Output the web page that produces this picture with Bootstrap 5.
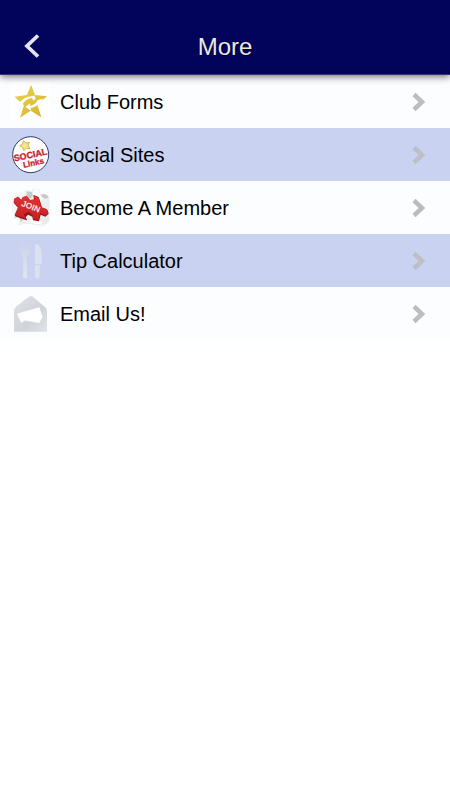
<!DOCTYPE html>
<html lang="en">
<head>
<meta charset="utf-8">
<meta name="viewport" content="width=device-width, initial-scale=1">
<title>More</title>
<link href="https://cdn.jsdelivr.net/npm/bootstrap@5.3.0/dist/css/bootstrap.min.css" rel="stylesheet">
<style>
body { font-family: "Liberation Sans", Arial, sans-serif; background: #fff; }
.top-bar { height: 75px; padding: 20px 20px 0; background: #02035a; border-bottom: 1px solid #34356c; box-shadow: 0 1px 8px rgba(0,0,0,.65); z-index: 2; }
.top-bar h1 { font-size: 24px; line-height: 54px; color: #e9e9e9; text-shadow: 0 1px 1px #000; }
.side { width: 24px; height: 52px; }
.menu-row { height: 53px; padding: 0 24px 0 11px; background: #fcfdff; color: #000; font-size: 20px; line-height: 30px; }
.menu-row.alt { background: #c9d2f0; }
.menu-row .label-text { margin-left: 10px; }
</style>
<script src="https://cdn.jsdelivr.net/npm/bootstrap@5.3.0/dist/js/bootstrap.bundle.min.js" defer></script>
</head>
<body>
<header class="top-bar d-flex align-items-center position-relative">
  <button type="button" class="side btn p-0 border-0 d-flex align-items-center justify-content-center" aria-label="Back">
    <svg width="16" height="26" viewBox="0 0 16 26"><path d="M14 1.500 3 12l11 10.500" fill="none" stroke="#e4e4f0" stroke-width="3.800"/></svg>
  </button>
  <h1 class="flex-grow-1 text-center fw-normal m-0">More</h1>
  <span class="side"></span>
</header>
<main>
<nav class="d-flex flex-column" aria-label="More">
  <a href="#forms" class="menu-row d-flex align-items-center text-decoration-none">
    <svg width="39" height="39" viewBox="33 18 117 117" aria-hidden="true">
      <defs><linearGradient id="gold" x1="0" y1="0" x2="1" y2="1"><stop offset="0" stop-color="#eed34e"/><stop offset="1" stop-color="#d0b22e"/></linearGradient></defs>
      <rect x="33" y="18" width="117" height="117" fill="#fff"/>
      <path fill="url(#gold)" d="M93 26 105 57 141 61 112 86 124 124 92 104 60 125 72 88 43 62 81 57Z"/>
      <path fill="#fff" d="M54 86Q68 62 99 60L103 57 107 68 100 74 96 66Q78 68 68 84L65 92Z"/>
      <path fill="#fff" d="M130 68Q116 92 92 96L93 104 76 93 90 82 91 90Q106 86 113 72Z"/>
    </svg>
    <span class="label-text flex-grow-1">Club Forms</span>
    <svg width="14" height="20" viewBox="0 0 14 20" aria-hidden="true"><path d="m2 2.500 8 7.500-8 7.500" fill="none" stroke="#bdbdbd" stroke-width="4.500"/></svg>
  </a>
  <a href="#social" class="menu-row alt d-flex align-items-center text-decoration-none">
    <svg width="39" height="39" viewBox="33 21 117 117" aria-hidden="true">
      <circle cx="92" cy="80" r="54" fill="#fff" stroke="#303c68" stroke-width="3"/>
      <path d="m70 38 7 7 11-2-4 10 6 9-11-1-8 7-3-11-9-4 9-5Z" fill="#f3e3a0" stroke="#d9b935" stroke-width="3"/>
      <g fill="#c91f32" stroke="#c91f32" stroke-width="1" font-family="Liberation Sans,Arial,sans-serif" font-weight="bold" text-anchor="middle" transform="rotate(-12 92 84)">
        <text x="92" y="90" font-size="27">SOCIAL</text>
        <text x="96" y="114" font-size="24">Links</text>
      </g>
    </svg>
    <span class="label-text flex-grow-1">Social Sites</span>
    <svg width="14" height="20" viewBox="0 0 14 20" aria-hidden="true"><path d="m2 2.500 8 7.500-8 7.500" fill="none" stroke="#bdbfc6" stroke-width="4.500"/></svg>
  </a>
  <a href="#join" class="menu-row d-flex align-items-center text-decoration-none">
    <svg width="39" height="39" viewBox="33 21 117 117" aria-hidden="true">
      <defs>
        <linearGradient id="tile" x1="0" y1="0" x2="1" y2="1"><stop offset="0" stop-color="#fafafa"/><stop offset="1" stop-color="#e6e8e9"/></linearGradient>
        <linearGradient id="red" x1="0" y1="0" x2="0" y2="1"><stop offset="0" stop-color="#df3434"/><stop offset="1" stop-color="#c81f24"/></linearGradient>
      </defs>
      <path fill="url(#tile)" d="M37 48 78 25 92 31 99 22 118 25 122 39 148 45V121L130 134 78 128 35 137 42 104 33 72Z"/>
      <path fill="#c6cacc" d="M80 31 96 33 99 45 90 53 79 47ZM123 41C132 36 146 43 145 50L135 54 125 47ZM42 111 54 102 67 110 68 119 48 128Z"/>
      <path fill="#fff" d="M103 25 116 28 119 43 131 52 124 59 99 39ZM35 115 55 108 62 118 55 130 36 137ZM84 125 100 108 121 119 131 131Z"/>
      <path fill="#9b141b" d="M68 50 80 46 90 57 102 56 100 43 116 49 122 66 126 80 142 86 146 98 136 107 122 101 117 121 99 118 97 107 84 101 77 109 82 118 70 115 44 105 54 80 41 65 42 54 54 47 64 57Z"/>
      <path fill="url(#red)" d="M68 48 80 44 90 57 104 55 102 42 116 48 120 66 125 79 140 84 145 95 135 103 121 96 115 117 101 114 98 103 86 92 72 99 75 112 44 101 55 77 42 63 43 54 54 47 64 56Z"/>
      <text x="92" y="85" transform="rotate(21 92 78)" text-anchor="middle" font-family="Liberation Sans,Arial,sans-serif" font-size="25" font-weight="bold" fill="#f8e5e5">JOIN</text>
    </svg>
    <span class="label-text flex-grow-1">Become A Member</span>
    <svg width="14" height="20" viewBox="0 0 14 20" aria-hidden="true"><path d="m2 2.500 8 7.500-8 7.500" fill="none" stroke="#bdbdbd" stroke-width="4.500"/></svg>
  </a>
  <a href="#tip" class="menu-row alt d-flex align-items-center text-decoration-none">
    <svg width="39" height="39" viewBox="33 21 117 117" aria-hidden="true">
      <defs><linearGradient id="silver" x1="0" y1="0" x2="0" y2="1"><stop offset="0" stop-color="#cdd5ea"/><stop offset="1" stop-color="#e0e5ec"/></linearGradient></defs>
      <path fill="url(#silver)" d="M62 32H66V49H69V32H73V49H76V32H80V49H83V32H87V54Q86 64 80 68L82 129Q76 137 69 129L70 68Q62 63 62 54Z"/>
      <path fill="#dbe1ee" d="M105 31H111Q124 36 125 57V90H105ZM105 94H119V130Q112 137 105 130Z"/>
    </svg>
    <span class="label-text flex-grow-1">Tip Calculator</span>
    <svg width="14" height="20" viewBox="0 0 14 20" aria-hidden="true"><path d="m2 2.500 8 7.500-8 7.500" fill="none" stroke="#bdbfc6" stroke-width="4.500"/></svg>
  </a>
  <a href="#email" class="menu-row d-flex align-items-center text-decoration-none">
    <svg width="39" height="39" viewBox="33 24 117 117" aria-hidden="true">
      <defs><linearGradient id="mail" x1="0" y1="0" x2="1" y2="1"><stop offset="0" stop-color="#dfe3e7"/><stop offset=".6" stop-color="#d0d4d9"/><stop offset="1" stop-color="#e0e3e6"/></linearGradient></defs>
      <path fill="url(#mail)" d="M42 72Q43 67 49 61L87 32Q93 28 99 32L136 64Q141 69 141 75V137H42Z"/>
      <path fill="#fff" d="M50 83 118 64 128 94 118 112 75 104 63 112Z"/>
      <path fill="none" stroke="#c5cad0" stroke-width="1" d="M50 83 63 112 75 104 118 112 128 95"/>
    </svg>
    <span class="label-text flex-grow-1">Email Us!</span>
    <svg width="14" height="20" viewBox="0 0 14 20" aria-hidden="true"><path d="m2 2.500 8 7.500-8 7.500" fill="none" stroke="#bdbdbd" stroke-width="4.500"/></svg>
  </a>
</nav>
</main>
</body>
</html>
